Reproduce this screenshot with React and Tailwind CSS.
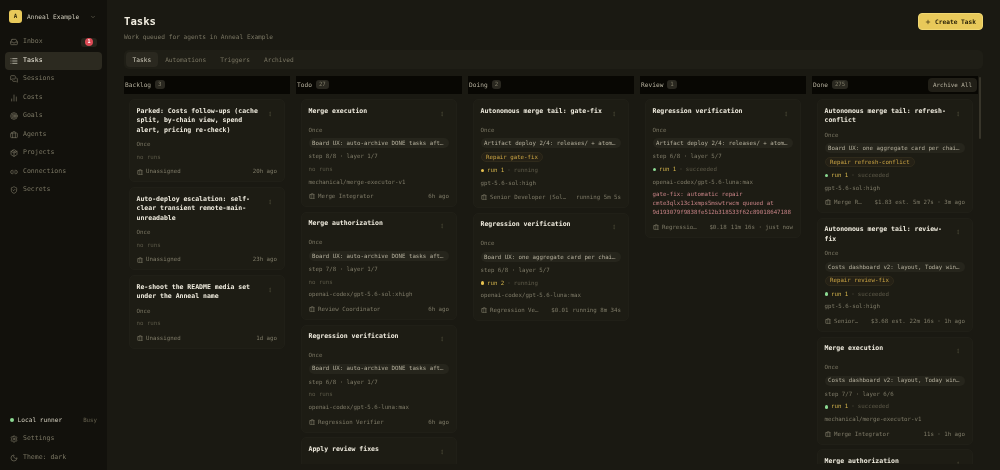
import React from 'react';
import {
  Inbox, List, MessagesSquare, ChartNoAxesColumn, Target, Package, Link2, ShieldCheck,
  Settings, Moon, ChevronDown, MoreVertical, Plus, Briefcase,
} from 'lucide-react';

const NAV = [
  { label: 'Inbox', icon: Inbox, badge: '1' },
  { label: 'Tasks', icon: List, active: true },
  { label: 'Sessions', icon: MessagesSquare },
  { label: 'Costs', icon: ChartNoAxesColumn },
  { label: 'Goals', icon: Target },
  { label: 'Agents', icon: Briefcase },
  { label: 'Projects', icon: Package },
  { label: 'Connections', icon: Link2 },
  { label: 'Secrets', icon: ShieldCheck },
];

const COLUMNS = [
  {
    name: 'Backlog',
    count: '3',
    cards: [
      { title: 'Parked: Costs follow-ups (cache split, by-chain view, spend alert, pricing re-check)', noRuns: true, agent: 'Unassigned', meta: '20h ago' },
      { title: 'Auto-deploy escalation: self-clear transient remote-main-unreadable', noRuns: true, agent: 'Unassigned', meta: '23h ago' },
      { title: 'Re-shoot the README media set under the Anneal name', noRuns: true, agent: 'Unassigned', meta: '1d ago' },
    ],
  },
  {
    name: 'Todo',
    count: '27',
    cards: [
      { title: 'Merge execution', chain: 'Board UX: auto-archive DONE tasks aft…', step: 'step 8/8 · layer 1/7', noRuns: true, model: 'mechanical/merge-executor-v1', agent: 'Merge Integrator', meta: '6h ago' },
      { title: 'Merge authorization', chain: 'Board UX: auto-archive DONE tasks aft…', step: 'step 7/8 · layer 1/7', noRuns: true, model: 'openai-codex/gpt-5.6-sol:xhigh', agent: 'Review Coordinator', meta: '6h ago' },
      { title: 'Regression verification', chain: 'Board UX: auto-archive DONE tasks aft…', step: 'step 6/8 · layer 1/7', noRuns: true, model: 'openai-codex/gpt-5.6-luna:max', agent: 'Regression Verifier', meta: '6h ago' },
      { title: 'Apply review fixes', cut: true },
    ],
  },
  {
    name: 'Doing',
    count: '2',
    cards: [
      { title: 'Autonomous merge tail: gate-fix', chain: 'Artifact deploy 2/4: releases/ + atom…', repair: 'Repair gate-fix', run: 'run 1', status: 'running', model: 'gpt-5.6-sol:high', agent: 'Senior Developer (Sol…', meta: 'running 5m 5s' },
      { title: 'Regression verification', chain: 'Board UX: one aggregate card per chai…', step: 'step 6/8 · layer 5/7', run: 'run 2', status: 'running', model: 'openai-codex/gpt-5.6-luna:max', agent: 'Regression Ve…', cost: '$0.01', meta: 'running 8m 34s' },
    ],
  },
  {
    name: 'Review',
    count: '1',
    cards: [
      {
        title: 'Regression verification', chain: 'Artifact deploy 2/4: releases/ + atom…', step: 'step 6/8 · layer 5/7', run: 'run 1', status: 'succeeded', model: 'openai-codex/gpt-5.6-luna:max',
        error: 'gate-fix: automatic repair cmte3qlx13c1xmps5mswtrwcm queued at 9d193079f9838fe512b318533f62c89018647188',
        agent: 'Regressio…', cost: '$0.18', meta: '11m 16s · just now',
      },
    ],
  },
  {
    name: 'Done',
    count: '275',
    archive: true,
    cards: [
      { title: 'Autonomous merge tail: refresh-conflict', chain: 'Board UX: one aggregate card per chai…', repair: 'Repair refresh-conflict', run: 'run 1', status: 'succeeded', model: 'gpt-5.6-sol:high', agent: 'Merge R…', cost: '$1.83 est.', meta: '5m 27s · 3m ago' },
      { title: 'Autonomous merge tail: review-fix', chain: 'Costs dashboard v2: layout, Today win…', repair: 'Repair review-fix', run: 'run 1', status: 'succeeded', model: 'gpt-5.6-sol:high', agent: 'Senior…', cost: '$3.68 est.', meta: '22m 16s · 1h ago' },
      { title: 'Merge execution', chain: 'Costs dashboard v2: layout, Today win…', step: 'step 7/7 · layer 6/6', run: 'run 1', status: 'succeeded', model: 'mechanical/merge-executor-v1', agent: 'Merge Integrator', meta: '11s · 1h ago' },
      { title: 'Merge authorization', cut: true },
    ],
  },
];

const TaskCard = ({ card }) => (
  <div className={`shrink-0 flex flex-col rounded-[5px] border border-[#201f17] bg-[#1d1c14] pl-[6.5px] pr-[7px] pt-[6.5px] pb-[5px] ${card.cut ? 'min-h-[60px]' : ''}`}>
    <div className="flex min-h-[14px] items-start">
      <div className="flex-1 text-[6.5px] leading-[9.5px] font-bold text-[#f0ecdf]">{card.title}</div>
      <div className="flex h-[14px] w-[14px] shrink-0 items-center justify-center text-[#55523f]">
        <MoreVertical size={6} />
      </div>
    </div>
    {!card.cut && (
      <>
        <div className="mt-[5px] flex flex-col items-start gap-[3.75px] text-[5.75px] leading-[9px]">
          <div className="text-[#7a7663]">Once</div>
          {card.chain && (
            <div className="flex h-[10px] w-full items-center rounded-full bg-[#26251c] px-[3.5px] text-[#b4af9c]">{card.chain}</div>
          )}
          {card.repair && (
            <div className="flex h-[10px] items-center rounded-full border border-[#2f2a1b] bg-[#252116] px-[4.5px] text-[#c9a343]">{card.repair}</div>
          )}
          {card.step && <div className="text-[#7f7b68]">{card.step}</div>}
          {card.noRuns && <div className="text-[#5c5948]">no runs</div>}
          {card.run && (
            <div className="flex items-center gap-[3px]">
              <span className={`h-[3.5px] w-[3.5px] rounded-full ${card.status === 'running' ? 'bg-[#e6c14f]' : 'bg-[#8bd992]'}`} />
              <span className="text-[#d4b44c]">{card.run}</span>
              <span className="text-[#5f5b4a]">·</span>
              <span className="text-[#5f5b4a]">{card.status}</span>
            </div>
          )}
          {card.model && <div className="text-[#7f7b68]">{card.model}</div>}
          {card.error && <div className="text-[#c78386]">{card.error}</div>}
        </div>
        <div className="mt-[5.5px] flex h-[9px] items-center justify-between text-[5.75px] leading-[9px] text-[#7f7b68]">
          <div className="flex items-center gap-[3px]">
            <Briefcase size={6.5} />
            <span>{card.agent}</span>
          </div>
          <div className="flex items-center gap-[4px]">
            {card.cost && <span>{card.cost}</span>}
            <span>{card.meta}</span>
          </div>
        </div>
      </>
    )}
  </div>
);

const BoardColumn = ({ column }) => (
  <div className="flex w-[166px] shrink-0 flex-col overflow-hidden">
    <div className="flex h-[18px] shrink-0 items-center justify-between bg-[#080703] px-[1px]">
      <div className="flex items-center gap-[4px] text-[6.2px] text-[#b4af9c]">
        <span>{column.name}</span>
        <span className="rounded-[3px] bg-[#2a2820] px-[3px] text-[5.75px] leading-[9px] text-[#7f7b68]">{column.count}</span>
      </div>
      {column.archive && (
        <div className="flex h-[14px] items-center rounded-[4px] bg-[#211f17] px-[5px] text-[5.9px] text-[#b4af9c]">Archive All</div>
      )}
    </div>
    <div className="flex min-h-0 flex-1 flex-col gap-[4.8px] px-[5px] pt-[5px]">
      {column.cards.map((card) => (
        <TaskCard key={card.title} card={card} />
      ))}
    </div>
  </div>
);

const App = () => (
  <div className="flex h-[470px] w-[1000px] overflow-hidden bg-[#1a1912] will-change-transform font-['DejaVu_Sans_Mono',monospace]">
    <aside className="flex w-[107px] shrink-0 flex-col bg-[#12110c] px-[5px]">
      <div className="flex h-[33px] shrink-0 items-center gap-[5px] px-[4px]">
        <div className="flex h-[13px] w-[13px] items-center justify-center rounded-[3px] bg-[#e8c95a] text-[5.8px] font-bold text-[#2a2208]">A</div>
        <span className="flex-1 text-[6.2px] text-[#d0ccbc]">Anneal Example</span>
        <ChevronDown size={6} className="mr-[2px] text-[#7f7b68]" />
      </div>
      <nav className="flex flex-col gap-[0.5px]">
        {NAV.map(({ label, icon: Icon, badge, active }) => (
          <div
            key={label}
            className={`flex h-[18px] items-center gap-[5px] rounded-[4px] px-[5px] text-[6.5px] ${active ? 'bg-[#2c2a20] text-[#ece8da]' : 'text-[#7a7663]'}`}
          >
            <Icon size={8} className="shrink-0" />
            <span className="flex-1">{label}</span>
            {badge && (
              <span className="flex h-[9px] w-[16px] items-center justify-center rounded-[3px] bg-[#26241b]">
                <span className="flex h-[8px] w-[8px] items-center justify-center rounded-full bg-[#dc4a55] text-[5px] font-bold text-white">{badge}</span>
              </span>
            )}
          </div>
        ))}
      </nav>
      <div className="mt-auto flex flex-col pb-[2.5px]">
        <div className="flex h-[19px] items-center gap-[4px] px-[5px] text-[6.2px]">
          <span className="h-[3.5px] w-[3.5px] rounded-full bg-[#8bd992]" />
          <span className="flex-1 text-[#d0ccbc]">Local runner</span>
          <span className="text-[5.75px] text-[#66624f]">Busy</span>
        </div>
        <div className="flex h-[19px] items-center gap-[5px] px-[5px] text-[6.5px] text-[#7a7663]">
          <Settings size={8} />
          <span>Settings</span>
        </div>
        <div className="flex h-[19px] items-center gap-[5px] px-[5px] text-[6.5px] text-[#7a7663]">
          <Moon size={8} />
          <span>Theme: dark</span>
        </div>
      </div>
    </aside>

    <main className="flex min-w-0 flex-1 flex-col px-[17px] pt-[13px] pb-[6px]">
      <div className="flex h-[30px] shrink-0 items-start justify-between">
        <div>
          <h1 className="text-[10.6px] leading-[16px] font-bold text-[#f0ecdf]">Tasks</h1>
          <p className="mt-[2.5px] text-[6.2px] leading-[9px] text-[#7a7663]">Work queued for agents in Anneal Example</p>
        </div>
        <button className="flex h-[17px] items-center gap-[4px] rounded-[4px] border border-[#f0d772] bg-[#e8c95a] px-[6px] text-[6.2px] font-bold text-[#2a2208]">
          <Plus size={6} strokeWidth={2.5} />
          Create Task
        </button>
      </div>
      <div className="mt-[7px] flex h-[19px] shrink-0 items-center gap-[1px] rounded-[5px] bg-[#1f1e16] px-[2px] text-[6.2px] text-[#7a7663]">
        <div className="flex h-[15px] items-center rounded-[4px] bg-[#2a281f] px-[6.5px] text-[#d0ccbc]">Tasks</div>
        <div className="flex h-[15px] items-center px-[6.5px]">Automations</div>
        <div className="flex h-[15px] items-center px-[6.5px]">Triggers</div>
        <div className="flex h-[15px] items-center px-[6.5px]">Archived</div>
      </div>
      <div className="relative mt-[7px] flex min-h-0 flex-1 gap-[6px] overflow-hidden">
        {COLUMNS.map((column) => (
          <BoardColumn key={column.name} column={column} />
        ))}
        <div className="absolute right-[2px] top-[1px] h-[62px] w-[2px] rounded-full bg-[#38352a]" />
      </div>
    </main>
  </div>
);

export default App;
